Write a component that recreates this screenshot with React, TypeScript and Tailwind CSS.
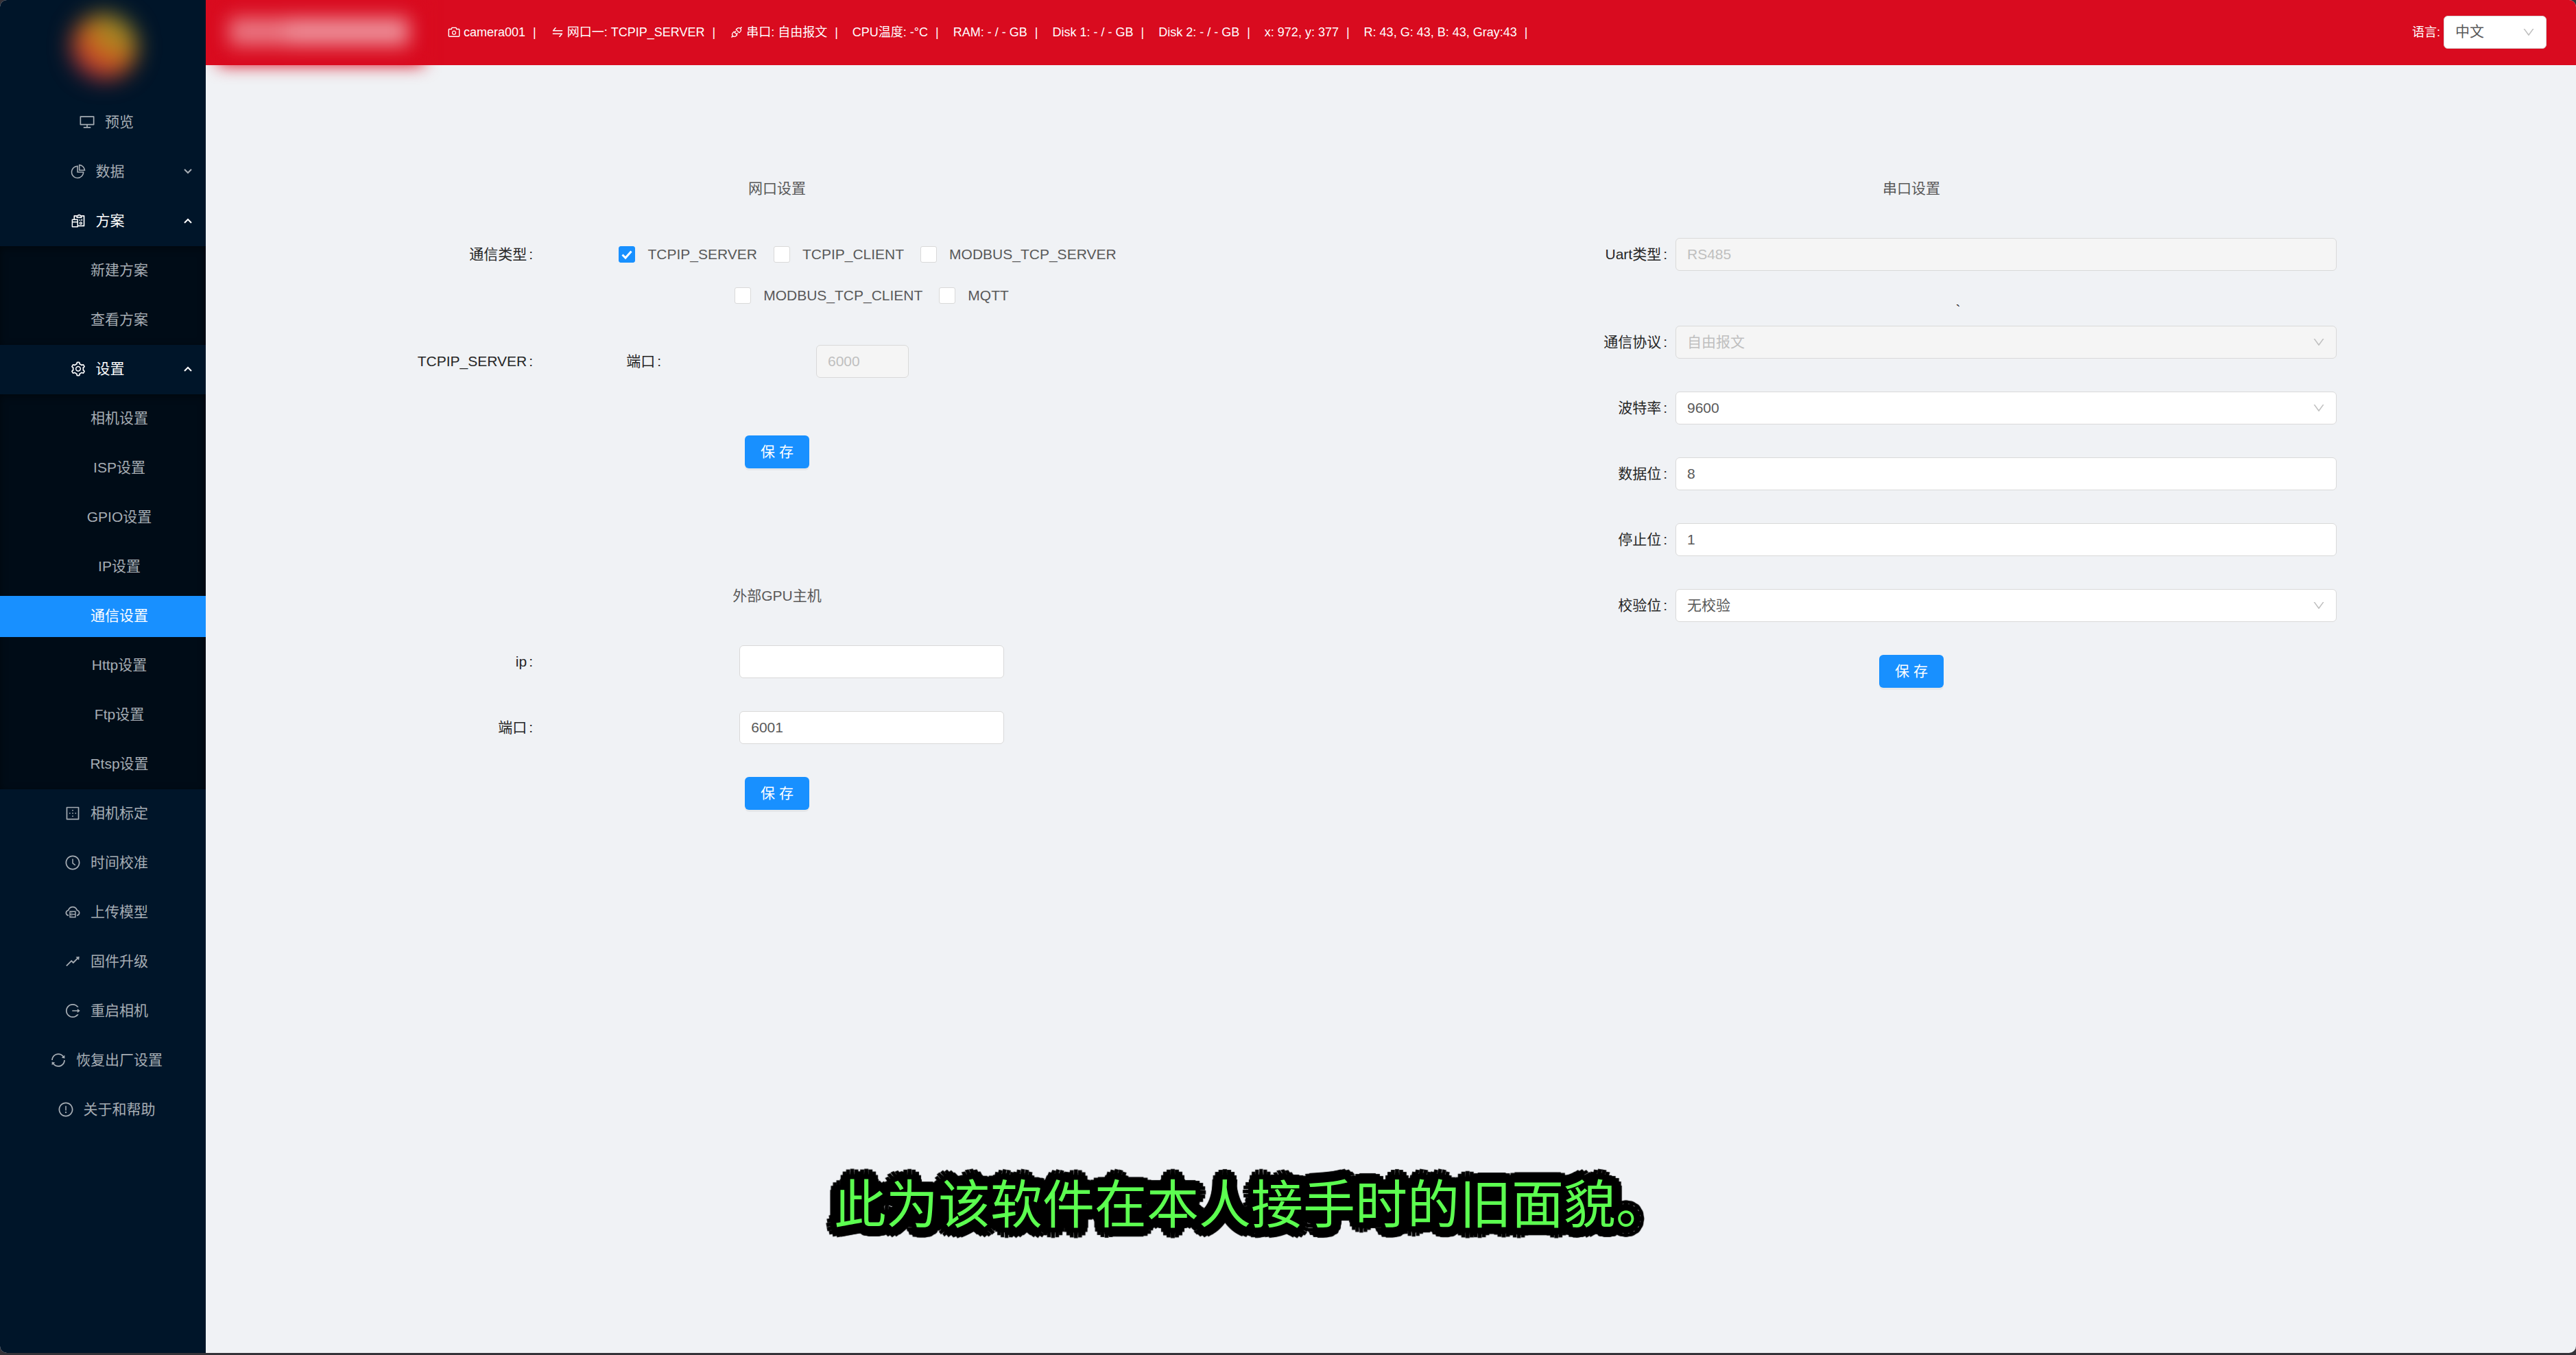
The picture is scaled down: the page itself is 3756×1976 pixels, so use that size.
import type { ReactNode } from "react";
import type { IconType } from "react-icons";
import {
  AiOutlineApi,
  AiOutlineBorderOuter,
  AiOutlineCamera,
  AiOutlineClockCircle,
  AiOutlineCloudServer,
  AiOutlineDesktop,
  AiOutlineDown,
  AiOutlineExclamationCircle,
  AiOutlineLogout,
  AiOutlinePieChart,
  AiOutlineReconciliation,
  AiOutlineRise,
  AiOutlineSetting,
  AiOutlineSwap,
  AiOutlineSync,
} from "react-icons/ai";

type Entry = { label: string; icon: IconType; open?: boolean; group?: boolean; children?: string[] };

const menu: Entry[] = [
  { label: "预览", icon: AiOutlineDesktop },
  { label: "数据", icon: AiOutlinePieChart, group: true },
  { label: "方案", icon: AiOutlineReconciliation, group: true, open: true, children: ["新建方案", "查看方案"] },
  {
    label: "设置",
    icon: AiOutlineSetting,
    group: true,
    open: true,
    children: ["相机设置", "ISP设置", "GPIO设置", "IP设置", "通信设置", "Http设置", "Ftp设置", "Rtsp设置"],
  },
  { label: "相机标定", icon: AiOutlineBorderOuter },
  { label: "时间校准", icon: AiOutlineClockCircle },
  { label: "上传模型", icon: AiOutlineCloudServer },
  { label: "固件升级", icon: AiOutlineRise },
  { label: "重启相机", icon: AiOutlineLogout },
  { label: "恢复出厂设置", icon: AiOutlineSync },
  { label: "关于和帮助", icon: AiOutlineExclamationCircle },
];

const status: { text: string; icon?: IconType }[] = [
  { text: "camera001", icon: AiOutlineCamera },
  { text: "网口一: TCPIP_SERVER", icon: AiOutlineSwap },
  { text: "串口: 自由报文", icon: AiOutlineApi },
  { text: "CPU温度: -°C" },
  { text: "RAM: - / - GB" },
  { text: "Disk 1: - / - GB" },
  { text: "Disk 2: - / - GB" },
  { text: "x: 972, y: 377" },
  { text: "R: 43, G: 43, B: 43, Gray:43" },
];

function Chevron({ up = false }: { up?: boolean }) {
  return (
    <svg viewBox="0 0 12 8" className="absolute right-5 w-3" fill="none" stroke="currentColor" strokeWidth="2">
      <path d={up ? "M1 7 L6 2 L11 7" : "M1 1 L6 6 L11 1"} />
    </svg>
  );
}

function MenuEntry({ entry }: { entry: Entry }) {
  const Icon = entry.icon;
  if (!entry.group) {
    return (
      <li className="py-1.5">
        <a href="#" className="flex h-[60px] items-center justify-center gap-3.5 pb-0.5 pl-9 pr-[26px]">
          <Icon className="size-6" />
          {entry.label}
        </a>
      </li>
    );
  }
  return (
    <li>
      <div className="py-1.5">
        <button
          type="button"
          aria-expanded={!!entry.open}
          className={
            entry.open
              ? "relative flex h-[60px] w-full items-center justify-center gap-3.5 pb-0.5 pl-9 pr-[53px] text-white"
              : "relative flex h-[60px] w-full items-center justify-center gap-3.5 pb-0.5 pl-9 pr-[53px]"
          }
        >
          <Icon className="size-6" />
          {entry.label}
          <Chevron up={entry.open} />
        </button>
      </div>
      {entry.children && (
        <ul className="bg-[#000c17] shadow-[inset_0_3px_12px_rgba(0,0,0,0.45)]">
          {entry.children.map((child) => (
            <li key={child} className="py-1.5">
              <a
                href="#"
                className={
                  child === "通信设置"
                    ? "flex h-[60px] items-center justify-center bg-[#1890ff] pb-0.5 pl-[72px] pr-6 text-white"
                    : "flex h-[60px] items-center justify-center pb-0.5 pl-[72px] pr-6"
                }
              >
                {child}
              </a>
            </li>
          ))}
        </ul>
      )}
    </li>
  );
}

function Sidebar() {
  return (
    <aside className="w-[300px] shrink-0 overflow-hidden bg-[#001529] text-[#a6adb4]">
      <div className="flex h-[143px] items-start justify-center pl-1 pt-5" aria-hidden="true">
        <div className="size-24 rounded-full bg-[radial-gradient(circle_at_80%_10%,#93872a_0%,#b3841f_35%,#d0551f_58%,#a82c3c_78%,#471a4c_100%)] blur-[16px]" />
      </div>
      <nav>
        <ul>
          {menu.map((entry) => (
            <MenuEntry key={entry.label} entry={entry} />
          ))}
        </ul>
      </nav>
    </aside>
  );
}

function Header() {
  return (
    <header className="relative flex h-[95px] items-center justify-between bg-[#d90b1f] pl-[352px] pr-[43px] text-lg text-white">
      <div className="absolute left-[18px] top-0 h-[95px] w-[300px] bg-[#d90b1f] blur-[12px] [clip-path:inset(0_-40px_-40px_-18px)]" />
      <div className="absolute left-[34px] top-[26px] flex h-[40px] w-[262px] blur-[14px]" aria-hidden="true">
        <div className="w-[84px] bg-white/45" />
        <div className="flex-1 bg-white/55" />
      </div>
      <div className="flex items-center pb-0.5">
        {status.map(({ text, icon: Icon }) => (
          <div key={text} className="flex items-center whitespace-nowrap">
            {Icon && <Icon className="mr-1 size-5" />}
            <span>{text}</span>
            <span className="mx-[11px]">|</span>
            <span className="w-2.5" />
          </div>
        ))}
      </div>
      <div className="flex items-center pb-0.5">
        <label htmlFor="lang" className="mr-[5px]">
          语言:
        </label>
        <SelectBox id="lang" value="中文" className="w-[150px]" />
      </div>
    </header>
  );
}

function SelectBox({ id, value, className = "w-full", disabled = false }: { id: string; value: string; className?: string; disabled?: boolean }) {
  return (
    <div className={`relative flex items-center ${className}`}>
      <select
        id={id}
        disabled={disabled}
        defaultValue={value}
        className="h-12 w-full appearance-none rounded-md border border-[#d9d9d9] bg-white px-4 text-[21px] text-[#595959] disabled:bg-[#f5f5f5] disabled:text-[#bfbfbf] disabled:opacity-100"
      >
        <option>{value}</option>
      </select>
      <AiOutlineDown className="pointer-events-none absolute right-4 size-5 text-[#bfbfbf]" />
    </div>
  );
}

function TextBox({ id, value = "", className = "w-full", disabled = false }: { id: string; value?: string; className?: string; disabled?: boolean }) {
  return (
    <input
      id={id}
      type="text"
      disabled={disabled}
      defaultValue={value}
      className={`h-12 min-w-0 rounded-md border border-[#d9d9d9] bg-white px-4 text-[21px] text-[#595959] disabled:bg-[#f5f5f5] disabled:text-[#bfbfbf] ${className}`}
    />
  );
}

function Row({ label, htmlFor, children }: { label: string; htmlFor?: string; children: ReactNode }) {
  return (
    <div className="grid grid-cols-[483fr_964fr_207fr]">
      <Label htmlFor={htmlFor}>{label}</Label>
      {children}
    </div>
  );
}

function Label({ htmlFor, children, className = "pr-3" }: { htmlFor?: string; children: ReactNode; className?: string }) {
  return (
    <label htmlFor={htmlFor} className={`flex h-12 items-center justify-end gap-[3px] whitespace-nowrap text-[#262626] ${className}`}>
      <span>{children}</span>
      <span>:</span>
    </label>
  );
}

function Check({ label, checked = false }: { label: string; checked?: boolean }) {
  return (
    <label className="relative mr-3 flex h-12 items-center gap-[18px] last:mr-0">
      <input
        type="checkbox"
        defaultChecked={checked}
        className="peer size-6 appearance-none rounded-[3px] border border-[#d9d9d9] bg-white checked:border-[#1890ff] checked:bg-[#1890ff]"
      />
      <svg
        viewBox="0 0 24 24"
        className="pointer-events-none absolute left-0 hidden size-6 peer-checked:block"
        fill="none"
        stroke="white"
        strokeWidth="3"
      >
        <path d="M5.5 12.5 L10 17 L18.5 7.5" />
      </svg>
      <span>{label}</span>
    </label>
  );
}

function Title({ children }: { children: ReactNode }) {
  return <h2 className="flex h-12 items-center justify-center">{children}</h2>;
}

function Save() {
  return (
    <button
      type="button"
      className="h-12 w-[94px] self-center rounded-md bg-[#1890ff] text-white shadow-[0_3px_0_rgba(0,0,0,0.045)]"
    >
      保 存
    </button>
  );
}

function NetworkForms() {
  return (
    <div>
      <section className="flex flex-col gap-12">
        <Title>网口设置</Title>
        <Row label="通信类型">
          <div className="flex flex-wrap justify-center gap-3 px-24">
            <Check label="TCPIP_SERVER" checked />
            <Check label="TCPIP_CLIENT" />
            <Check label="MODBUS_TCP_SERVER" />
            <Check label="MODBUS_TCP_CLIENT" />
            <Check label="MQTT" />
          </div>
        </Row>
        <Row label="TCPIP_SERVER">
          <div className="grid grid-cols-[175fr_226fr_135fr_428fr]">
            <Label htmlFor="port" className="">
              端口
            </Label>
            <div />
            <TextBox id="port" value="6000" disabled />
          </div>
        </Row>
        <div className="flex justify-center pt-9">
          <Save />
        </div>
      </section>
      <section className="mt-[162px] flex flex-col gap-12">
        <Title>外部GPU主机</Title>
        <Row label="ip" htmlFor="gpu-ip">
          <TextBox id="gpu-ip" className="w-2/5 justify-self-center" />
        </Row>
        <Row label="端口" htmlFor="gpu-port">
          <TextBox id="gpu-port" value="6001" className="w-2/5 justify-self-center" />
        </Row>
        <Save />
      </section>
    </div>
  );
}

function SerialForm() {
  return (
    <section className="flex flex-col gap-12">
      <Title>串口设置</Title>
      <div className="flex flex-col">
        <Row label="Uart类型" htmlFor="uart">
          <TextBox id="uart" value="RS485" disabled />
        </Row>
        <p className="my-4 h-12 pl-[136px] text-center leading-[82px] text-[#262626]">`</p>
        <Row label="通信协议" htmlFor="protocol">
          <SelectBox id="protocol" value="自由报文" disabled />
        </Row>
      </div>
      <Row label="波特率" htmlFor="baud">
        <SelectBox id="baud" value="9600" />
      </Row>
      <Row label="数据位" htmlFor="data-bits">
        <TextBox id="data-bits" value="8" />
      </Row>
      <Row label="停止位" htmlFor="stop-bits">
        <TextBox id="stop-bits" value="1" />
      </Row>
      <Row label="校验位" htmlFor="parity">
        <SelectBox id="parity" value="无校验" />
      </Row>
      <Save />
    </section>
  );
}

export default function App() {
  return (
    <div className="min-h-screen bg-[#343238] pb-[3px] font-['Liberation_Sans','Noto_Sans_CJK_SC',sans-serif] text-[21px] leading-8 text-[#595959]">
      <div className="relative flex min-h-[calc(100vh-3px)] overflow-hidden rounded-[10px] bg-[#f0f2f5]">
        <Sidebar />
        <div className="min-w-0 flex-1">
          <Header />
          <main className="grid grid-cols-2 pl-1.5 pr-[142px] pt-[156px]">
            <NetworkForms />
            <SerialForm />
          </main>
        </div>
        <p className="absolute left-[1216px] top-[1702px] whitespace-nowrap text-[76px] leading-[112px] text-[#5cff50] [-webkit-text-stroke:14px_black] [paint-order:stroke_fill] [text-shadow:15px_0_1px_#000,14px_6px_1px_#000,11px_11px_1px_#000,6px_14px_1px_#000,0_15px_1px_#000,-6px_14px_1px_#000,-11px_11px_1px_#000,-14px_6px_1px_#000,-15px_0_1px_#000,-14px_-6px_1px_#000,-11px_-11px_1px_#000,-6px_-14px_1px_#000,0_-15px_1px_#000,6px_-14px_1px_#000,11px_-11px_1px_#000,14px_-6px_1px_#000,10px_0_1px_#000,7px_7px_1px_#000,0_10px_1px_#000,-7px_7px_1px_#000,-10px_0_1px_#000,-7px_-7px_1px_#000,0_-10px_1px_#000,7px_-7px_1px_#000]">
          此为该软件在本人接手时的旧面貌。
        </p>
      </div>
    </div>
  );
}
